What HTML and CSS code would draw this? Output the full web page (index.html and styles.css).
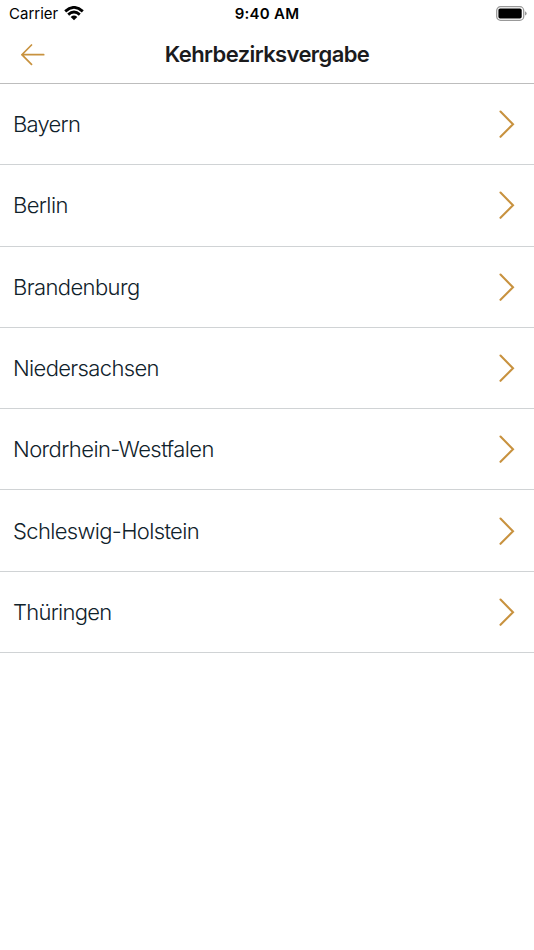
FILE: index.html
```html
<!DOCTYPE html>
<html lang="de">
<head>
<meta charset="utf-8">
<title>Kehrbezirksvergabe</title>
<link rel="stylesheet" href="styles.css">
</head>
<body>
<svg class="defs" width="0" height="0"><symbol id="chevron" viewBox="0 0 16 28"><path d="M1.5 1.6 14 14.2 1.5 26.8"/></symbol></svg>
<header class="header">
  <div class="status">
    <div class="carrier"><span class="carrier-name">Carrier</span>
      <svg class="wifi" width="20" height="15" viewBox="0 0 20 15"><path d="M1.2 5.4Q10-2.6 18.8 5.4M4.2 8.6Q10 3.5 15.8 8.6"/><path class="dot" d="M6.7 10.9Q10 8.2 13.3 10.9L10 14.3Z"/></svg>
    </div>
    <time class="time">9:40 AM</time>
    <svg class="battery" width="31" height="15" viewBox="0 0 31 15"><rect class="case" x=".7" y=".7" width="27" height="13.6" rx="3.9"/><rect x="2.4" y="2.4" width="23.3" height="10" rx="1.7"/><path class="cap" d="M29 5.2q1.7.8 1.7 2.2T29 9.6z"/></svg>
  </div>
  <nav class="nav">
    <svg class="back" width="24" height="22" viewBox="0 0 24 22"><path d="M22.7 10.7H.9M10.5 1 .9 10.7l9.6 9.7"/></svg>
    <h1 class="title">Kehrbezirksvergabe</h1>
  </nav>
</header>
<main class="list">
  <a class="row"><span class="bayern">Bayern</span><svg class="chevron"><use href="#chevron"/></svg></a>
  <a class="row"><span class="berlin">Berlin</span><svg class="chevron"><use href="#chevron"/></svg></a>
  <a class="row"><span class="brandenburg">Brandenburg</span><svg class="chevron"><use href="#chevron"/></svg></a>
  <a class="row"><span class="niedersachsen">Niedersachsen</span><svg class="chevron"><use href="#chevron"/></svg></a>
  <a class="row"><span class="nrw">Nordrhein-Westfalen</span><svg class="chevron"><use href="#chevron"/></svg></a>
  <a class="row"><span class="holstein">Schleswig-Holstein</span><svg class="chevron"><use href="#chevron"/></svg></a>
  <a class="row"><span class="thueringen">Thüringen</span><svg class="chevron"><use href="#chevron"/></svg></a>
</main>
</body>
</html>
```
FILE: styles.css
```css
* { box-sizing: border-box; }
body { margin: 0; min-height: 950px; background: #fff; color: #10222b; font-family: Inter, sans-serif; }
.defs { display: block; }
.header { height: 84px; border-bottom: 1px solid #bdbdbd; color: #1b1b1d; }
.status { display: grid; grid-template-columns: 1fr auto 1fr; align-items: center; height: 27px; padding: 0 7px 0 9px; color: #000; }
.carrier { display: flex; align-items: center; gap: 5.5px; font-size: 15px; }
.wifi path { fill: none; stroke: #000; stroke-width: 2.8; }
.wifi .dot { fill: #000; stroke: none; }
.time { margin-right: 2px; font-size: 15px; font-weight: 600; letter-spacing: .25px; }
.battery { justify-self: end; }
.battery .case { fill: none; stroke: #999; stroke-width: 1.3; }
.battery .cap { fill: #999; }
.nav { display: grid; grid-template-columns: 45px 1fr 45px; align-items: center; height: 56px; }
.back { margin-left: 21px; }
.back path { fill: none; stroke: #c8923f; stroke-width: 1.7; stroke-linecap: round; }
.title { margin: -2px 0 0; text-align: center; font-size: 22px; font-weight: 600; letter-spacing: -.6px; }
.row { display: flex; justify-content: space-between; align-items: center; height: 81.3px; padding: 0 19.5px 0 13px; border-bottom: 1px solid #d0d3d5; font-size: 22px; font-weight: 300; letter-spacing: -.6px; }
.bayern { letter-spacing: -.75px; }
.niedersachsen, .holstein { letter-spacing: -.65px; }
.nrw { letter-spacing: -.57px; }
.thueringen { letter-spacing: -.73px; }
.chevron { width: 16px; height: 28px; fill: none; stroke: #c8923f; stroke-width: 2.1; stroke-linecap: round; }
```
